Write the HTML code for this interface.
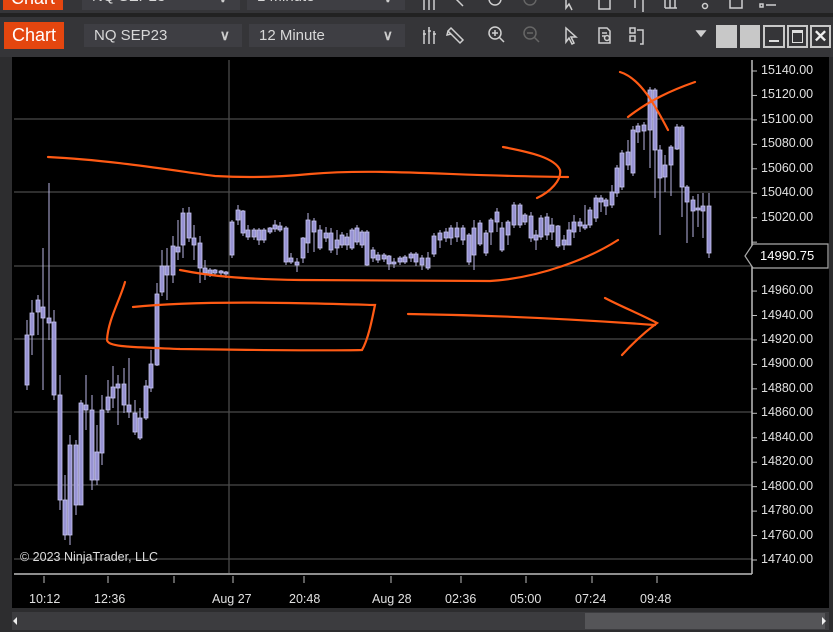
<!DOCTYPE html>
<html><head><meta charset="utf-8"><style>
*{margin:0;padding:0;box-sizing:border-box}
body{width:833px;height:632px;background:#2d2d2f;position:relative;overflow:hidden;font-family:"Liberation Sans",sans-serif}
.abs{position:absolute}
.btn{background:#e4460f;color:#fff;font-size:18px;line-height:27px;text-align:center}
.dd{background:#3e3e43;color:#d8d8d8;font-size:15px;line-height:23px;padding-left:10px}
.dd span{position:absolute;right:12px;top:0;font-size:14px;font-weight:bold;color:#ccc}
.ax{color:#e0e0e0;font-size:12.5px;position:absolute}
</style></head><body>
<!-- top partial bar -->
<div class="abs" style="left:0;top:0;width:833px;height:13px;background:#353538;overflow:hidden">
<div class="abs btn" style="left:3px;top:-14px;width:60px;height:24px;line-height:24px">Chart</div>
<div class="abs dd" style="left:82px;top:-10px;width:158px;height:20px;font-size:15px;line-height:14px">NQ SEP23<span style="line-height:14px">&#8744;</span></div>
<div class="abs dd" style="left:247px;top:-10px;width:158px;height:20px;font-size:15px;line-height:14px">1 Minute<span style="line-height:14px">&#8744;</span></div>
<svg class="abs" style="left:415px;top:-10px" width="418" height="22" stroke="#cfcfcf" fill="none" stroke-width="1.5">
<path d="M9 6v14M14 3v17M19 7v13"/><path d="M36 4l12 12"/><circle cx="80" cy="9" r="6"/><circle cx="115" cy="9" r="6" stroke="#666"/>
<path d="M151 4v14l3-4 3 6"/><path d="M184 4h8l3 3v12h-11z"/><path d="M215 4h5v14M228 4v18"/><path d="M250 4v14M255 4v14M260 4v14M250 18h12"/><circle cx="290" cy="16" r="2.5"/><path d="M295 8h4"/><path d="M315 6h12v12h-12z"/><path d="M345 6h3v3h-3zM345 14h3v3h-3zM351 7h10M351 15h10"/>
</svg>
</div>
<div class="abs" style="left:0;top:13px;width:833px;height:4px;background:#222"></div>
<!-- toolbar -->
<div class="abs" style="left:0;top:17px;width:833px;height:40px;background:#353538"></div>
<div class="abs btn" style="left:4px;top:22px;width:60px;height:27px">Chart</div>
<div class="abs dd" style="left:84px;top:24px;width:158px;height:23px">NQ SEP23<span>&#8744;</span></div>
<div class="abs dd" style="left:249px;top:24px;width:156px;height:23px">12 Minute<span>&#8744;</span></div>
<svg class="abs" style="left:415px;top:22px" width="418" height="28" stroke="#cfcfcf" fill="none" stroke-width="1.5">
<path d="M9 8v14M14 5v17M19 9v13M8 12h3M13 9h3M18 12h3"/>
<path d="M36 6l12 12-3 3-12-12zM33 9l-1 4 4-1" />
<circle cx="80" cy="11" r="6"/><path d="M84 15l5 5M77 11h6M80 8v6"/>
<circle cx="115" cy="11" r="6" stroke="#666"/><path d="M119 15l5 5M112 11h6" stroke="#666"/>
<path d="M151 6v14l3-4 3 6 2-1-3-6h5z"/>
<path d="M184 6h8l3 3v12h-11zM187 11h5M187 14h3"/><circle cx="192" cy="16" r="2.5"/>
<path d="M215 6h5v5h-5zM215 14h5v5h-5zM222 8h6v14h-3"/>
<path d="M282 9h8l-4 5z" fill="#cfcfcf"/>
</svg>
<div class="abs" style="left:716px;top:25px;width:21px;height:23px;background:#c8c8c8"></div>
<div class="abs" style="left:740px;top:25px;width:20px;height:23px;background:#c8c8c8"></div>
<div class="abs" style="left:763px;top:25px;width:22px;height:23px;border:2px solid #c8c8c8"><div class="abs" style="left:4px;top:13px;width:10px;height:2px;background:#ddd"></div></div>
<div class="abs" style="left:787px;top:25px;width:21px;height:23px;border:2px solid #c8c8c8"><div class="abs" style="left:3px;top:3px;width:11px;height:13px;border:1.5px solid #ddd;border-top-width:3px"></div></div>
<div class="abs" style="left:810px;top:25px;width:21px;height:23px;border:2px solid #c8c8c8;color:#eee;font-size:17px;font-weight:bold;line-height:19px;text-align:center">&#10005;</div>
<!-- chart area -->
<div class="abs" style="left:12px;top:57px;width:817px;height:551px;background:#000"></div>
<svg class="abs" style="left:0;top:0" width="833" height="632" id="ch">
<g stroke="#4a4a4a" stroke-width="1.3">
<line x1="14" x2="752" y1="119" y2="119"/><line x1="14" x2="752" y1="192" y2="192"/><line x1="14" x2="752" y1="266" y2="266"/>
<line x1="14" x2="752" y1="339" y2="339"/><line x1="14" x2="752" y1="412" y2="412"/><line x1="14" x2="752" y1="485" y2="485"/>
<line x1="14" x2="752" y1="559" y2="559"/><line x1="229" x2="229" y1="60" y2="573"/>
</g>
<g stroke="#bdbdbd" stroke-width="1.5">
<line x1="752" x2="752" y1="60" y2="574"/><line x1="14" x2="752" y1="574" y2="574"/>
</g>
<g id="ticks" stroke="#bdbdbd" stroke-width="1"></g>
<g id="cand"></g>
<g stroke="#ff5a14" stroke-width="2.2" fill="none" stroke-linecap="round">
<path d="M48 157C110 160 170 170 215 176C250 178 280 177 310 174C380 168 450 176 568 177"/>
<path d="M503 147C530 152 555 158 560 170C562 180 550 192 537 198"/>
<path d="M180 270C210 276 240 279 300 280C380 281 450 281 490 281C540 278 590 258 618 240"/>
<path d="M125 282C120 300 108 320 107 340C108 347 130 347 180 349C250 350 320 351 362 350C368 340 372 320 375 305C300 303 200 300 133 307"/>
<path d="M408 314C480 315 560 318 655 325"/>
<path d="M605 298C620 306 640 314 657 323C645 332 632 344 622 355"/>
<path d="M620 72C640 78 655 105 668 130"/>
<path d="M628 117C650 100 672 90 695 82"/>
</g>
<path d="M745 256l8-12h75v24h-75z" fill="#000" stroke="#aaa" stroke-width="1.2"/>
</svg>
<div class="ax" style="left:760px;top:248px;color:#fff;font-size:13px">14990.75</div>
<div id="plab"></div>
<div class="ax" style="left:20px;top:550px;color:#ddd;font-size:12.5px">© 2023 NinjaTrader, LLC</div>
<div class="ax" style="left:29px;top:592px">10:12</div>
<div class="ax" style="left:94px;top:592px">12:36</div>
<div class="ax" style="left:212px;top:592px">Aug 27</div>
<div class="ax" style="left:289px;top:592px">20:48</div>
<div class="ax" style="left:372px;top:592px">Aug 28</div>
<div class="ax" style="left:445px;top:592px">02:36</div>
<div class="ax" style="left:510px;top:592px">05:00</div>
<div class="ax" style="left:575px;top:592px">07:24</div>
<div class="ax" style="left:640px;top:592px">09:48</div>
<!-- scrollbar -->
<div class="abs" style="left:0;top:608px;width:833px;height:24px;background:#2d2d2f"></div>
<div class="abs" style="left:12px;top:612px;width:817px;height:18px;background:#3c3c3f"></div>
<div class="abs" style="left:585px;top:613px;width:240px;height:16px;background:#555558"></div>
<div class="abs" style="left:13px;top:617px;width:0;height:0;border:4px solid transparent;border-right-color:#eee;border-left:0"></div>
<div class="abs" style="left:822px;top:617px;width:0;height:0;border:4px solid transparent;border-left-color:#eee;border-right:0"></div>
<script>
var C=[[27,335,385,320,390],[32,313,335,300,355],[38,300,312,295,335],[43,307,318,248,390],[49,318,323,183,340],[54,322,395,310,400],[60,395,500,375,510],[65,500,535,475,540],[70,445,535,435,545],[76,445,505,440,515],[81,403,505,400,505],[86,405,410,375,430],[92,410,480,395,490],[97,452,480,425,485],[102,410,453,395,465],[108,397,410,380,413],[113,387,398,366,408],[118,384,388,375,425],[124,384,405,368,413],[129,405,412,358,418],[135,413,432,400,435],[140,418,438,408,440],[146,386,418,380,420],[151,364,388,350,392],[157,294,365,283,366],[162,266,292,250,296],[167,266,275,248,300],[173,246,275,236,283],[178,247,252,220,260],[183,213,245,208,258],[189,213,238,207,242],[194,238,245,225,260],[200,243,268,236,283],[205,268,273,260,280],[210,270,274,268,277],[215,270,273,269,276],[221,271,273,270,276],[226,272,274,271,278],
[232,222,255,220,258],[238,210,220,205,225],[243,211,233,210,236],[248,230,237,225,240],[254,230,237,228,240],[259,230,240,228,245],[264,230,240,228,243],[270,228,232,227,234],[275,225,229,220,232],[280,226,230,222,232],[286,228,262,226,265],[291,258,262,253,264],[297,262,265,258,272],[303,238,258,237,263],[308,220,243,213,253],[314,221,232,218,252],[320,230,248,225,250],[326,233,238,227,242],[331,233,250,228,253],[337,240,248,230,255],[342,235,245,232,248],[347,237,245,233,250],[352,230,248,228,250],[357,228,242,225,245],[362,232,245,230,248],[367,232,265,230,266],[373,250,258,247,262],[378,255,260,252,263],[384,255,259,253,262],[389,256,264,255,270],[394,262,264,258,268],[400,258,262,256,265],[405,257,262,255,264],[411,254,258,252,262],[416,254,262,252,266],[422,258,265,255,270],[428,258,268,252,270],[434,236,254,233,257],[440,233,240,230,248],[446,232,238,228,242],[451,228,238,225,245],[457,228,237,222,242],[463,228,240,225,245],[469,235,262,233,265],[474,228,255,220,270],[480,223,244,220,246],[486,233,253,230,256],[491,220,232,218,245],[497,212,222,208,232],[502,228,250,222,252],[508,222,235,220,245],[514,205,225,202,228],[520,205,225,203,228],[525,215,222,213,225],[531,216,238,212,242],[536,235,240,230,250],[541,218,237,215,240],[547,217,235,213,240],[552,225,232,218,240],[558,226,246,225,248],[564,240,245,235,250],[569,230,245,222,245],[574,222,232,215,238],[580,222,226,218,232],[585,225,228,205,230],[590,210,225,207,228],[596,198,218,195,222],[601,198,202,195,212],[606,200,206,198,215],[612,192,205,185,208],[617,168,193,165,197],[622,153,187,150,190],[628,152,165,140,170],[633,130,173,126,176],[638,126,132,123,143],[644,125,131,122,150],[650,90,130,87,168],[655,90,150,88,198],[660,150,178,145,235],[665,165,177,155,192],[671,147,165,145,196],[677,127,149,124,150],[682,127,187,125,217],[687,187,202,185,243],[693,200,211,196,237],[698,208,210,194,227],[703,206,211,193,238],[709,206,253,193,258]];
var s='';C.forEach(function(c){var x=c[0];s+='<line x1="'+x+'" x2="'+x+'" y1="'+c[3]+'" y2="'+c[4]+'" stroke="#b8b5e2" stroke-width="1"/>';s+='<rect x="'+(x-2)+'" y="'+c[1]+'" width="4" height="'+Math.max(2,c[2]-c[1])+'" fill="#9692d2" stroke="#c9c6f0" stroke-width="0.8"/>';});
document.getElementById('cand').innerHTML=s;
var t='',p='';for(var i=0;i<21;i++){var v=15140-i*20,y=71+i*24.45;t+='<line x1="752" x2="757" y1="'+y+'" y2="'+y+'"/>';if(v!==15000&&v!==14980)p+='<div class="ax" style="left:761px;top:'+(y-8)+'px">'+v+'.00</div>';}
[44,108,174,233,304,391,461,526,592,657].forEach(function(x){t+='<line x1="'+x+'" x2="'+x+'" y1="576" y2="583"/>';});
document.getElementById('ticks').innerHTML=t;document.getElementById('plab').innerHTML=p;
</script>
</body></html>
